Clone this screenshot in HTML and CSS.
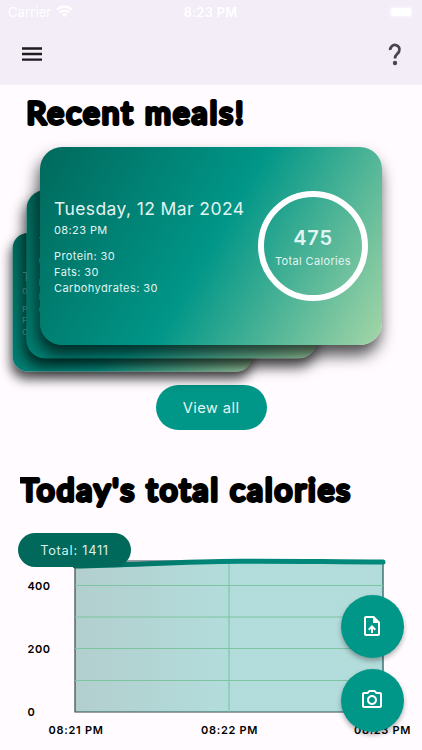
FILE: index.html
```html
<!DOCTYPE html>
<html lang="en">
<head>
    <meta charset="UTF-8">
    <meta name="viewport" content="width=device-width, initial-scale=1.0">
    <title>Recent meals</title>
    <link rel="stylesheet" href="styles.css">
</head>
<body>
    <header class="top-bar">
        <div class="status">
            <div class="carrier">
                <span>Carrier</span>
                <svg width="17" height="12" viewBox="0 0 17 12" fill="none" stroke="#fff" stroke-width="2.3">
                    <path d="M1 4.6a10.7 10.7 0 0 1 15 0M3.8 7.5a6.7 6.7 0 0 1 9.4 0"/>
                    <path d="M8.5 12L5.9 9.4a3.7 3.7 0 0 1 5.2 0z" fill="#fff" stroke="none"/>
                </svg>
            </div>
            <span class="clock">8:23 PM</span>
            <div class="battery"><span></span></div>
        </div>
        <div class="nav">
            <svg width="22" height="16" viewBox="0 0 22 16" stroke="#1d1b20" stroke-width="2.3">
                <path d="M1 2.5h20M1 8h20M1 13.7h20"/>
            </svg>
            <svg width="14" height="24" viewBox="0 0 14 24" fill="none" stroke="#49454f" stroke-width="2.8">
                <path d="M2.3 8a4.600 4.600 0 1 1 8.700 1.600C10 12 7 12.700 7 16.500"/>
                <circle cx="7" cy="21" r="2.200" fill="#49454f" stroke="none"/>
            </svg>
        </div>
    </header>

    <main>
        <h1 class="recent">
            <svg width="396" height="62" viewBox="0 0 396 62">
                <text x="0.5" y="39.2" textLength="217">Recent meals!</text>
            </svg>
        </h1>

        <!-- Stacked meal cards, front to back -->
        <section class="stack">
            <article class="card front">
                <div class="info">
                    <h2>Tuesday, 12 Mar 2024</h2>
                    <p class="time">08:23 PM</p>
                    <p>Protein: 30</p>
                    <p>Fats: 30</p>
                    <p>Carbohydrates: 30</p>
                </div>
                <div class="ring">
                    <strong>475</strong>
                    <span>Total Calories</span>
                </div>
            </article>
            <article class="card middle">
                <div class="info">
                    <h2>T</h2>
                    <p class="time">0</p>
                    <p>P</p>
                    <p>F</p>
                    <p>C</p>
                </div>
            </article>
            <article class="card back">
                <div class="info">
                    <h2>T</h2>
                    <p class="time">0</p>
                    <p>P</p>
                    <p>F</p>
                    <p>C</p>
                </div>
            </article>
        </section>

        <button class="view-all">View all</button>

        <h1 class="today">
            <svg width="400" height="103" viewBox="0 0 400 103">
                <text x="0" y="71.2" textLength="330">Today's total calories</text>
            </svg>
        </h1>

        <section class="chart">
            <svg width="422" height="217" viewBox="0 533 422 217">
                <defs>
                    <linearGradient id="line" gradientUnits="userSpaceOnUse" x1="75" y1="0" x2="383" y2="0">
                        <stop offset="0" stop-color="#00695c"/>
                        <stop offset="0.5" stop-color="#00897b"/>
                        <stop offset="1" stop-color="#00897b"/>
                    </linearGradient>
                    <linearGradient id="area" gradientUnits="userSpaceOnUse" x1="75" y1="0" x2="383" y2="0">
                        <stop offset="0" stop-color="#00695c"/>
                        <stop offset="0.5" stop-color="#009688"/>
                        <stop offset="1" stop-color="#009688"/>
                    </linearGradient>
                </defs>
                <path d="M75 561H383V712H75Z" fill="none" stroke="#37434b" stroke-width="1.2"/>
                <path d="M75 566C135 565 178 561.5 240 561.2S330 562 383 562V712H75Z" fill="url(#area)" fill-opacity="0.3"/>
                <path d="M75 585.5H383M75 617H383M75 648.5H383M75 680.5H383M229 561V712" stroke="#7cc5a0" stroke-width="1.1"/>
                <path d="M75 566C135 565 178 561.5 240 561.2S330 562 383 562" fill="none" stroke="url(#line)" stroke-width="5" stroke-linecap="round"/>
                <g class="labels">
                    <text x="27.5" y="590" textLength="23">400</text>
                    <text x="27.5" y="653" textLength="23">200</text>
                    <text x="27.5" y="716">0</text>
                    <text x="48.5" y="734" textLength="55">08:21 PM</text>
                    <text x="201" y="734" textLength="57">08:22 PM</text>
                    <text x="354" y="734" textLength="57">08:23 PM</text>
                </g>
            </svg>
            <span class="total">Total: 1411</span>
        </section>
    </main>

    <!-- Floating actions -->
    <div class="actions">
        <button aria-label="Upload">
            <svg width="24" height="24" viewBox="0 0 24 24" fill="#fff">
                <path d="M14 2H6c-1.1 0-2 .9-2 2v16c0 1.100.9 2 2 2h12c1.100 0 2-.9 2-2V8zM18 20H6V4h7v5h5z"/>
                <path d="M8 15.010l1.410 1.410L11 14.840V19h2v-4.160l1.590 1.590L16 15.010 12.010 11z"/>
            </svg>
        </button>
        <button aria-label="Camera">
            <svg width="24" height="24" viewBox="0 0 24 24" fill="#fff">
                <path d="M20 4h-3.170L15 2H9L7.170 4H4c-1.100 0-2 .9-2 2v12c0 1.100.9 2 2 2h16c1.100 0 2-.9 2-2V6c0-1.100-.9-2-2-2zm0 14H4V6h4.050l1.830-2h4.240l1.830 2H20z"/>
                <path d="M12 7c-2.760 0-5 2.240-5 5s2.240 5 5 5 5-2.240 5-5-2.240-5-5-5zm0 8c-1.650 0-3-1.350-3-3s1.350-3 3-3 3 1.350 3 3-1.350 3-3 3z"/>
            </svg>
        </button>
    </div>
</body>
</html>
```
FILE: styles.css
```css
* {
    margin: 0;
    padding: 0;
    box-sizing: border-box;
}

body {
    width: 422px;
    height: 750px;
    overflow: hidden;
    position: relative;
    background: #fffbff;
    font-family: Inter, sans-serif;
    color: #000;
}

main {
    display: flex;
    flex-direction: column;
}

svg {
    display: block;
}

/* Status and navigation */
.top-bar {
    height: 85px;
    background: #f3edf7;
}

.status {
    display: grid;
    grid-template-columns: 1fr auto 1fr;
    align-items: center;
    height: 24px;
    padding: 0 9px 0 8px;
    color: #fff;
    font-size: 13px;
}

.carrier {
    display: flex;
    gap: 5px;
    align-items: center;
    letter-spacing: 0.1px;
}

.carrier svg {
    margin-top: -2px;
}

.clock {
    font-size: 12.7px;
    font-weight: 600;
    letter-spacing: 0.3px;
}

.battery {
    justify-self: end;
    width: 24px;
    height: 12px;
    padding: 2px;
    border-radius: 4px;
    background: #f7f3fa;
}

.battery span {
    display: block;
    height: 8px;
    border-radius: 2px;
    background: #fff;
}

.nav {
    display: flex;
    justify-content: space-between;
    align-items: center;
    height: 60px;
    padding: 0 20px 0 21px;
}

/* Headings */
h1 {
    font-family: Lato, sans-serif;
    font-size: 31.5px;
    font-weight: 400;
}

h1 text {
    stroke: #000;
    stroke-width: 3.8px;
    stroke-linejoin: round;
}

.recent {
    height: 62px;
    padding-left: 26px;
}

.today {
    height: 103px;
    padding-left: 20px;
}

/* Meal cards */
.stack {
    display: grid;
    height: 238px;
    padding-left: 40px;
    align-items: start;
}

.card {
    grid-area: 1 / 1;
    display: flex;
    justify-content: space-between;
    align-items: center;
    width: 342px;
    height: 198px;
    padding: 0 14px;
    border-radius: 22px;
    color: #e2f4f1;
    background: linear-gradient(120deg, #00695c, #009688 50%, #a5d6a7);
    box-shadow: -2px 10px 16px 0 rgba(0, 0, 0, 0.7);
    transform-origin: 0 0;
}

.front {
    z-index: 3;
}

.middle {
    z-index: 2;
    transform: translate(-13.5px, 43px) scale(0.85);
}

.back {
    z-index: 1;
    transform: translate(-27.5px, 86px) scale(0.7);
}

.info {
    font-size: 11px;
    line-height: 15.7px;
    letter-spacing: 0.4px;
    padding-top: 1px;
}

.info h2 {
    font-size: 17.5px;
    font-weight: 400;
    line-height: 24px;
    letter-spacing: 0.4px;
    white-space: nowrap;
}

.info .time {
    margin: 2px 0 11px;
}

.middle .info,
.back .info {
    opacity: 0.5;
}

.ring {
    display: flex;
    flex-direction: column;
    align-items: center;
    justify-content: center;
    width: 110px;
    height: 110px;
    padding-top: 5px;
    border: 6px solid #fff;
    border-radius: 50%;
    white-space: nowrap;
}

.ring strong {
    font-size: 20px;
    font-weight: 600;
    line-height: 26px;
    letter-spacing: 0.8px;
}

.ring span {
    font-size: 11px;
    line-height: 21px;
    letter-spacing: 0.35px;
}

button {
    border: 0;
    background: #009688;
    color: #e6f5f3;
    font-family: inherit;
}

.view-all {
    align-self: center;
    width: 111px;
    height: 45px;
    border-radius: 23px;
    font-size: 14.7px;
    letter-spacing: 0.4px;
}

/* Chart */
.chart {
    position: relative;
}

.labels {
    font-size: 11px;
    font-weight: 600;
    letter-spacing: 0.6px;
}

.total {
    position: absolute;
    top: 0;
    left: 18px;
    width: 113px;
    height: 34px;
    border-radius: 17px;
    background: #00695c;
    color: #d9efeb;
    font-size: 12.8px;
    line-height: 35px;
    letter-spacing: 0.75px;
    text-align: center;
}

.actions {
    position: absolute;
    right: 18px;
    top: 595px;
    display: flex;
    flex-direction: column;
    gap: 11px;
}

.actions button {
    display: grid;
    place-items: center;
    width: 63px;
    height: 63px;
    padding: 0 1px 2px 0;
    border-radius: 50%;
    box-shadow: 0 3px 5px rgba(0, 0, 0, 0.3);
}
```
